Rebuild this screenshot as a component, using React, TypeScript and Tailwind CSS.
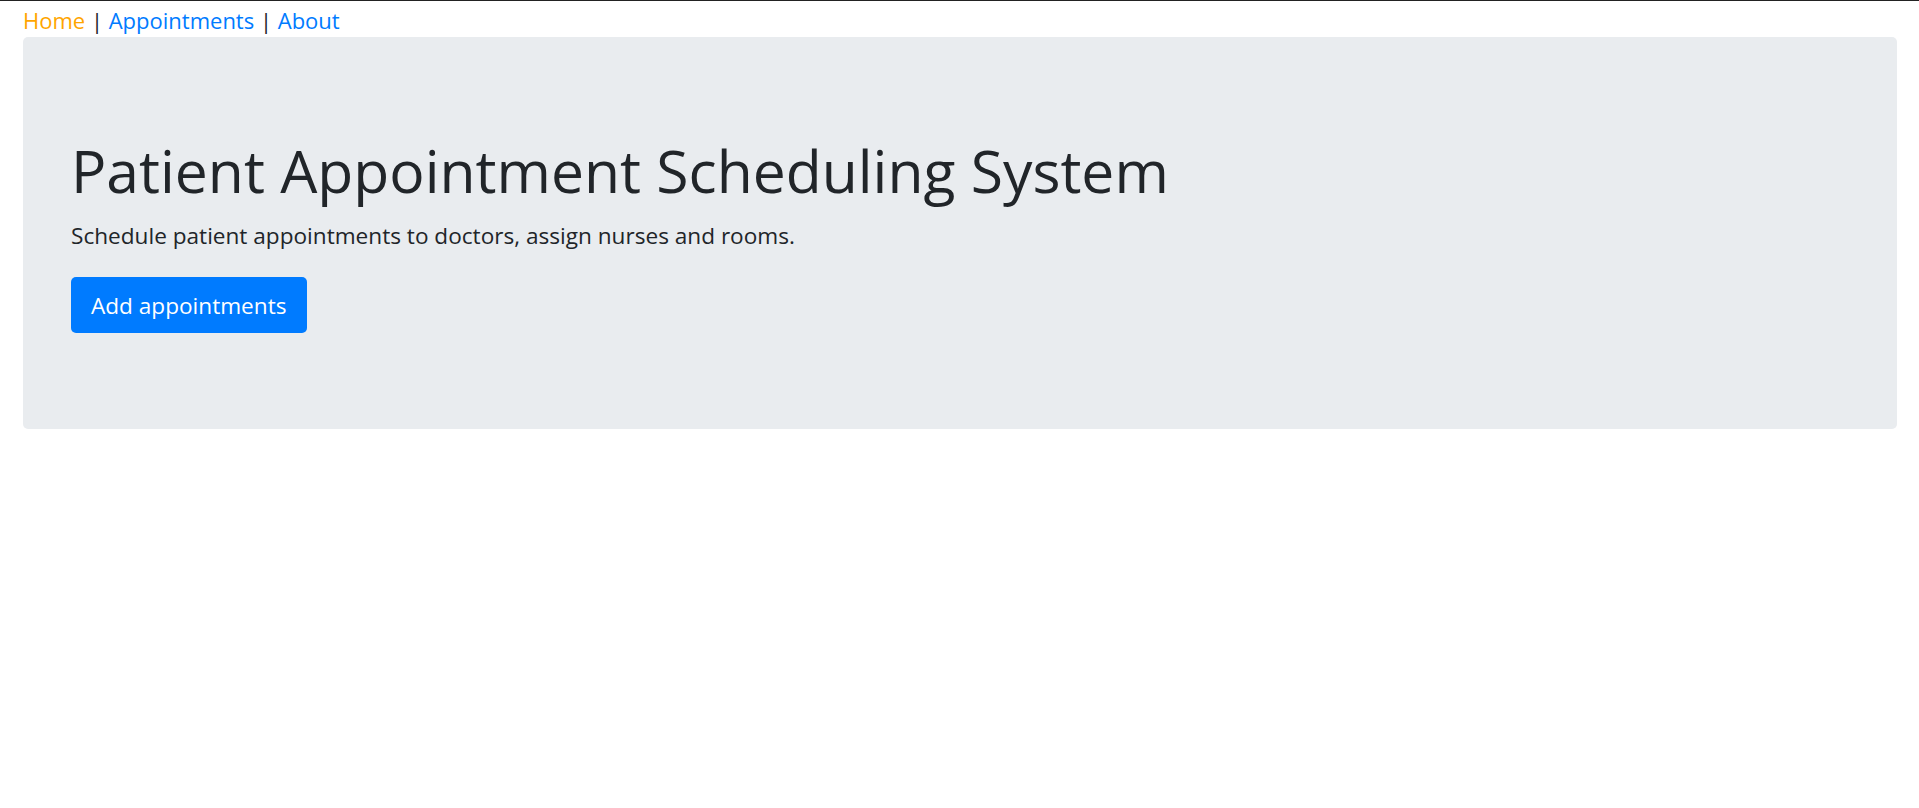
export default function App() {
  const font = { fontFamily: '"Open Sans", "Noto Sans", sans-serif' };
  return (
    <div className="min-h-[808px] bg-white border-t border-[#222222] text-[#212529]" style={font}>
      <nav className="pl-[23px] pt-[2px] text-[22px] leading-[34px]">
        <a href="#" className="text-[#ffa500]">Home</a>
        <span> | </span>
        <a href="#" className="text-[#007bff]">Appointments</a>
        <span> | </span>
        <a href="#" className="text-[#007bff]">About</a>
      </nav>
      <div className="ml-[23px] mr-[22px] rounded-[5px] bg-[#e9ecef] pl-[48px] pt-[98px] pb-[96px]">
        <h1 className="text-[58.8px] leading-[70px] font-normal text-[#212529]">
          Patient Appointment Scheduling System
        </h1>
        <p className="mt-[14px] text-[22.6px] leading-[34px] text-[#212529]">
          Schedule patient appointments to doctors, assign nurses and rooms.
        </p>
        <button className="mt-[24px] rounded-[5px] bg-[#007bff] px-[20px] pt-[11px] pb-[9px] text-[22.6px] leading-[36px] text-white">
          Add appointments
        </button>
      </div>
    </div>
  );
}
